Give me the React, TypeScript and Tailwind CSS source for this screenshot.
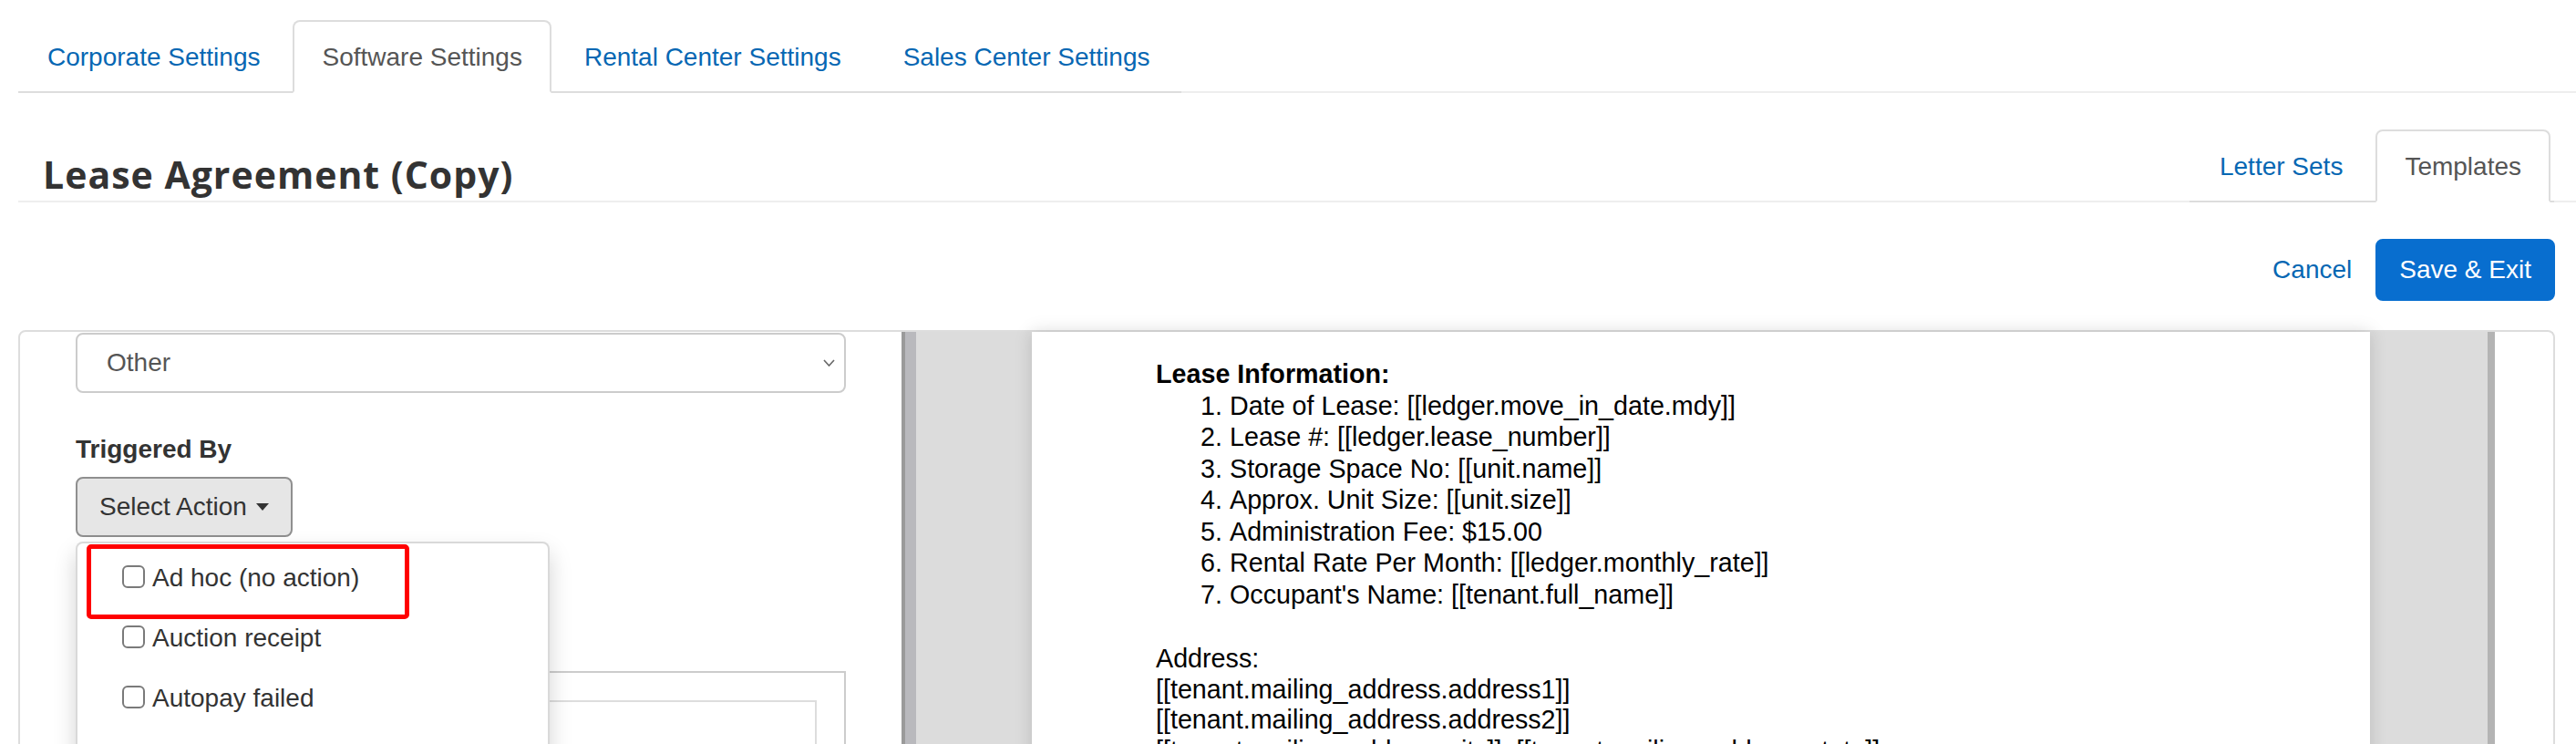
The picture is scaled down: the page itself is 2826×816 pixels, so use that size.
import React from "react";

const LINK = "text-[#0667b3]";

function Tab({ label, active }: { label: string; active?: boolean }) {
  return (
    <li
      className={`-mb-[2px] mr-[4px] shrink-0 whitespace-nowrap rounded-t-[8px] border-2 px-[30px] pt-[19px] pb-[17px] leading-[40px] ${
        active
          ? "border-[#ddd] border-b-transparent bg-white text-[#555]"
          : `border-transparent ${LINK}`
      }`}
    >
      {label}
    </li>
  );
}

function CheckItem({ label }: { label: string }) {
  return (
    <li className="pt-[8px] pb-[18px] pl-[49px]">
      <label className="flex items-start gap-[8px] whitespace-nowrap leading-[40px] text-[#333]">
        <span className="mt-[6px] h-[25px] w-[25px] shrink-0 rounded-[6px] border-2 border-[#7a7a7a] bg-white" />
        {label}
      </label>
    </li>
  );
}

const leaseInfo = [
  "Date of Lease: [[ledger.move_in_date.mdy]]",
  "Lease #: [[ledger.lease_number]]",
  "Storage Space No: [[unit.name]]",
  "Approx. Unit Size: [[unit.size]]",
  "Administration Fee: $15.00",
  "Rental Rate Per Month: [[ledger.monthly_rate]]",
  "Occupant's Name: [[tenant.full_name]]",
];

export default function App() {
  return (
    <div className="h-[816px] w-[2826px] overflow-hidden bg-white font-['Liberation_Sans',Arial,sans-serif] text-[28px] text-[#333]">
      {/* settings tabs */}
      <div className="ml-[20px] border-b-2 border-[#eee] pt-[22px]">
        <ul className="-mb-[2px] flex w-[1276px] border-b-2 border-[#ddd]">
          <Tab label="Corporate Settings" />
          <Tab label="Software Settings" active />
          <Tab label="Rental Center Settings" />
          <Tab label="Sales Center Settings" />
        </ul>
      </div>

      {/* title row */}
      <div className="ml-[20px] flex h-[120px] items-end justify-between border-b-2 border-[#eee]">
        <h3 className="pl-[27px] pb-[7px] font-['Open_Sans',sans-serif] text-[41px] font-bold leading-[44px] tracking-[1px] text-[#333]">
          Lease Agreement (Copy)
        </h3>
        <ul className="-mb-[2px] mr-[24px] flex border-b-2 border-[#ddd] pl-[1px]">
          <Tab label="Letter Sets" />
          <Tab label="Templates" active />
        </ul>
      </div>

      {/* actions */}
      <div className="flex justify-end pt-[40px] pr-[23px]">
        <button className={`border-2 border-transparent px-[24px] py-[12px] leading-[40px] ${LINK}`}>
          Cancel
        </button>
        <button className="rounded-[8px] border-2 border-[#086ecf] bg-[#086ecf] px-[24px] py-[12px] leading-[40px] text-white">
          Save &amp; Exit
        </button>
      </div>

      {/* editor panel */}
      <div className="mt-[32px] ml-[20px] mr-[23px] flex h-[480px] rounded-[8px] border-2 border-[#ddd]">
        <div className="w-[967px] shrink-0 px-[61px] pt-[1px]">
          <div className="flex h-[66px] items-center justify-between rounded-[8px] border-2 border-[#ccc] pl-[32px] pr-[10px] text-[#555]">
            <span className="leading-[40px]">Other</span>
            <svg width="13" height="8" viewBox="0 0 13 8" fill="none">
              <polyline points="1,1 6.5,7 12,1" stroke="#666" strokeWidth="1.6" />
            </svg>
          </div>

          <div className="mt-[42px] font-bold leading-[40px] text-[#333]">Triggered By</div>

          <div className="relative mt-[10px] inline-block">
            <button className="flex items-center whitespace-nowrap rounded-[8px] border-2 border-[#8f8f8f] bg-[#e6e6e6] px-[24px] py-[11px] leading-[40px] text-[#333]">
              Select Action
              <svg className="ml-[10px]" width="14" height="8" viewBox="0 0 14 8">
                <polygon points="0,0 14,0 7,8" fill="#333" />
              </svg>
            </button>

            <div className="absolute top-full left-0 z-10 mt-[5px] h-[400px] w-[520px] rounded-[8px] border-2 border-[rgba(0,0,0,0.15)] bg-white shadow-[0_12px_24px_rgba(0,0,0,0.175)]">
              <ul className="pt-[10px]">
                <CheckItem label="Ad hoc (no action)" />
                <CheckItem label="Auction receipt" />
                <CheckItem label="Autopay failed" />
              </ul>
              <div className="absolute top-[1px] left-[10px] h-[82px] w-[354px] rounded-[5px] border-[5px] border-[#ff0000]" />
            </div>
          </div>

          <div className="mt-[147px] border-2 border-[#ccc] pt-[30px] pr-[30px]">
            <div className="h-[200px] border-2 border-[#ddd]" />
          </div>
        </div>

        {/* splitter */}
        <div className="w-[4px] shrink-0 bg-[#9a9a9a]" />
        <div className="w-[12px] shrink-0 bg-[#b9b9bd]" />

        {/* document */}
        <div className="flex flex-1 bg-[#dcdcdc]">
          <div className="ml-[127px] w-[1468px] shrink-0 bg-white pt-[29px] pl-[136px] text-[28.7px] text-black shadow-[0_0_18px_rgba(0,0,0,0.15)]">
            <p className="font-bold leading-[34.5px]">Lease Information:</p>
            <ol className="list-decimal pl-[81px] leading-[34.5px]">
              {leaseInfo.map((l) => (
                <li key={l}>{l}</li>
              ))}
            </ol>
            <div className="mt-[37px] leading-[33.5px]">
              <p>Address:</p>
              <p>[[tenant.mailing_address.address1]]</p>
              <p>[[tenant.mailing_address.address2]]</p>
              <p>[[tenant.mailing_address.city]], [[tenant.mailing_address.state]]</p>
            </div>
          </div>
          <div className="flex-1" />
          <div className="w-[8px] shrink-0 bg-[#b4b4b4]" />
          <div className="w-[64px] shrink-0 rounded-tr-[6px] bg-white" />
        </div>
      </div>
    </div>
  );
}
